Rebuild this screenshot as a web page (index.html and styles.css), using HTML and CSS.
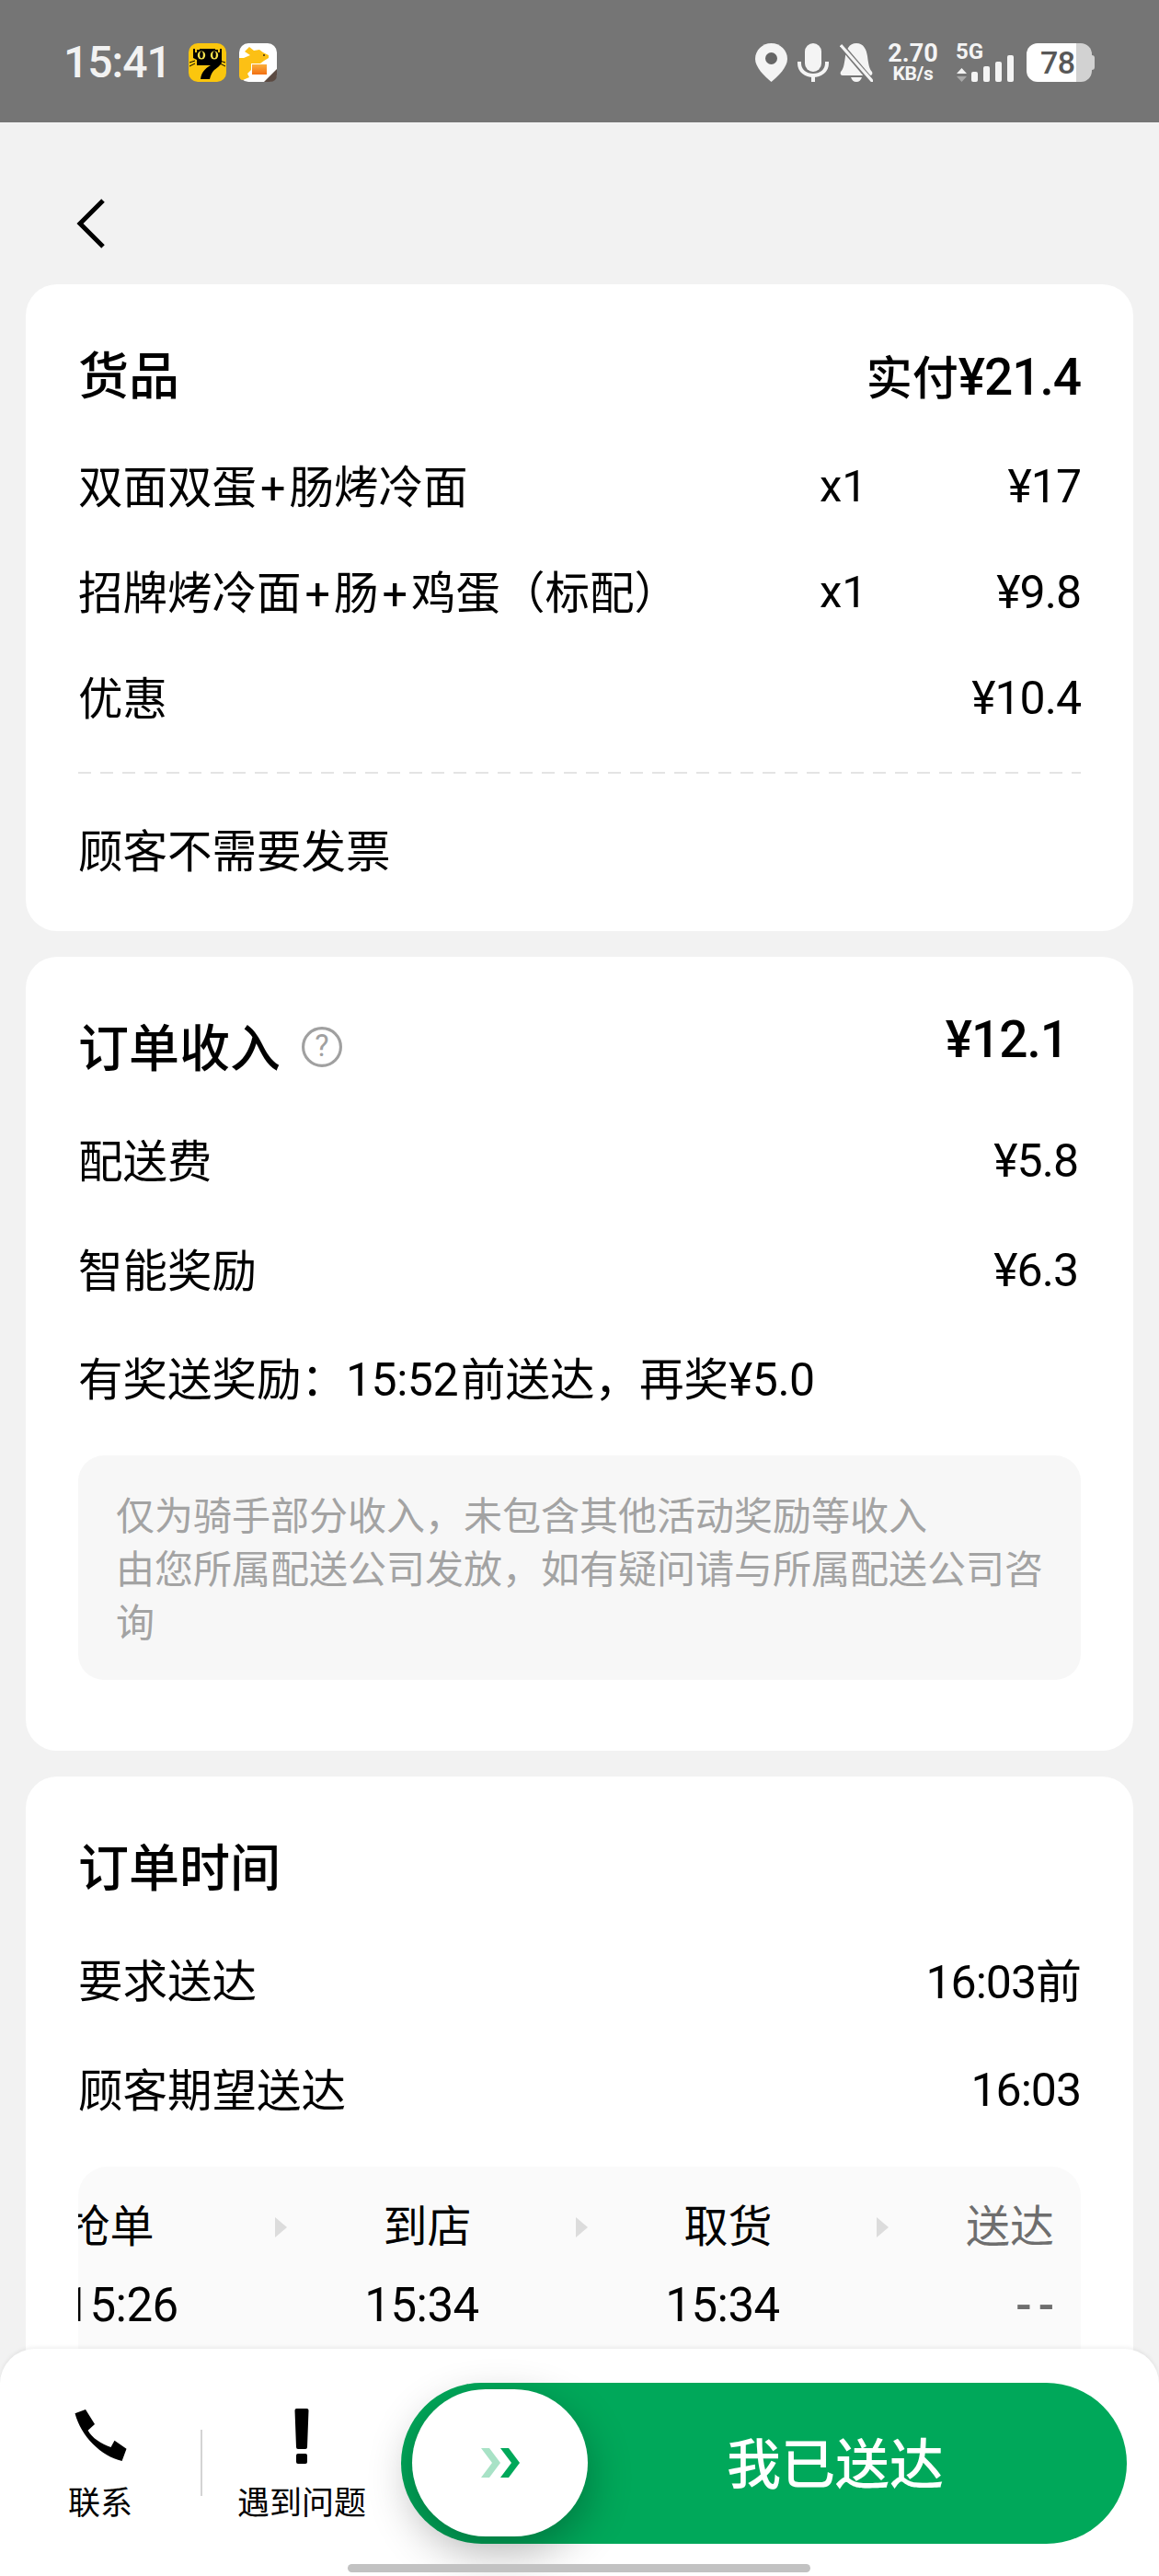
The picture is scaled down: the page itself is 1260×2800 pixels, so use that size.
FILE: index.html
```html
<!DOCTYPE html>
<html lang="zh-CN">
<head>
<meta charset="utf-8">
<title>订单详情</title>
<link rel="stylesheet" href="styles.css">
</head>
<body>
<div class="screen">
  <header class="status">
    <div class="status-left">
      <span class="clock">15:41</span>
      <svg class="app-icon" viewBox="0 0 41 42">
        <rect width="41" height="42" rx="10" fill="#fbc60d"/>
        <path d="M5 6H36V20C36 23 32 26 28 29C25 32 24 35 23 39H13C14 32 17 28 24 24H9V18L5 16Z" fill="#000"/>
        <path d="M7 5H12V7H9V10H7ZM34 5H29V7H32V10H34Z" fill="#fbc60d"/>
        <ellipse cx="14" cy="13" rx="4.2" ry="4.6" fill="#f6e34e"/>
        <ellipse cx="28" cy="13" rx="4.2" ry="4.6" fill="#f6e34e"/>
        <ellipse cx="14" cy="12.5" rx="1.8" ry="3.8" fill="#000"/>
        <ellipse cx="28" cy="12.5" rx="1.8" ry="3.8" fill="#000"/>
        <path d="M1 21L7 19M1 25L7 22M40 21L34 19M40 25L34 22" stroke="#000" stroke-width="1"/>
      </svg>
      <svg class="app-icon" viewBox="0 0 41 42">
        <defs>
          <linearGradient id="box" x1="0" y1="0" x2="0" y2="1">
            <stop offset="0" stop-color="#fbb03b"/>
            <stop offset="1" stop-color="#f26f13"/>
          </linearGradient>
        </defs>
        <rect width="41" height="42" rx="10" fill="#fff"/>
        <path d="M6 9L11 4L16 8L22 7L26 10L32 13L32 16L27 19L23 22H13V29L9 33L11 37L4 40Q0 40 0 34V16L5 16L12 13Z" fill="#fcc015"/>
        <rect x="14" y="23" width="16" height="11" fill="url(#box)"/>
        <path d="M41 28V34Q41 42 33 42H27Z" fill="#5b4a42"/>
        <circle cx="27" cy="13" r="1" fill="#3a2a10"/>
      </svg>
    </div>
    <div class="status-right">
      <svg class="si-pin" viewBox="0 0 35 42">
        <path d="M17.5 0C7.8 0 0 7.6 0 17C0 26 10 36 17.5 42C25 36 35 26 35 17C35 7.6 27.2 0 17.5 0Z" fill="#f4f4f4"/>
        <circle cx="17.5" cy="16.5" r="6.5" fill="#666"/>
      </svg>
      <svg class="si-mic" viewBox="0 0 34 42">
        <rect x="8" y="0" width="18" height="31" rx="9" fill="#f4f4f4"/>
        <path d="M2 20V22C2 30 9 35 17 35C25 35 32 30 32 22V20" fill="none" stroke="#f4f4f4" stroke-width="4"/>
        <rect x="15" y="35" width="4" height="7" fill="#f4f4f4"/>
      </svg>
      <svg class="si-bell" viewBox="0 0 36 42">
        <path d="M18 0C26 0 29 7 30 14C31 22 32 28 35 31C36 33 35 35 33 35H3C1 35 0 33 1 31C4 28 5 22 6 14C7 7 10 0 18 0Z" fill="#f4f4f4"/>
        <path d="M12 37H24C23 40 21 42 18 42C15 42 13 40 12 37Z" fill="#f4f4f4"/>
        <path d="M2 3L36 43" stroke="#757575" stroke-width="6"/>
        <path d="M1 2L36 42" stroke="#f4f4f4" stroke-width="3.2"/>
      </svg>
      <div class="speed">
        <span class="speed-num">2.70</span>
        <span class="speed-unit">KB/s</span>
      </div>
      <svg class="si-net" viewBox="0 0 64 42">
        <text class="si-5g" x="0" y="17">5G</text>
        <path d="M1 33L6.5 27L12 33Z" fill="#f4f4f4"/>
        <path d="M1 36L6.5 42L12 36Z" fill="#a8a8a8"/>
        <rect x="17" y="31" width="7" height="11" rx="2" fill="#f4f4f4"/>
        <rect x="30" y="25" width="7" height="17" rx="2" fill="#f4f4f4"/>
        <rect x="43" y="20" width="7" height="22" rx="2" fill="#f4f4f4"/>
        <rect x="56" y="13" width="7" height="29" rx="2" fill="#f4f4f4"/>
      </svg>
      <div class="battery">
        <div class="battery-body"><span class="battery-num">78</span></div>
        <div class="battery-nub"></div>
      </div>
    </div>
  </header>

  <nav class="appbar">
    <svg class="back" viewBox="0 0 34 56">
      <path d="M30 3L5 28L30 53" fill="none" stroke="#000" stroke-width="5"/>
    </svg>
  </nav>

  <main class="cards">
    <section class="card card-goods">
      <div class="title-row">
        <h2 class="title">货品</h2>
        <div class="paid"><span class="paid-label">实付</span><span class="paid-amount">¥21.4</span></div>
      </div>
      <div class="item"><span class="label">双面双蛋<span class="plus">+</span>肠烤冷面</span><span class="qty">x1</span><span class="amount">¥17</span></div>
      <div class="item"><span class="label">招牌烤冷面<span class="plus">+</span>肠<span class="plus">+</span>鸡蛋（标配）</span><span class="qty">x1</span><span class="amount">¥9.8</span></div>
      <div class="item"><span class="label">优惠</span><span></span><span class="amount">¥10.4</span></div>
      <div class="dash"></div>
      <div class="invoice">顾客不需要发票</div>
    </section>

    <section class="card card-income">
      <div class="title-row">
        <div class="title-with-help">
          <h2 class="title">订单收入</h2>
          <svg class="help" viewBox="0 0 42 42">
            <circle cx="21" cy="21" r="19.5" fill="none" stroke="#a0a0a0" stroke-width="3"/>
            <text class="help-mark" x="21" y="31" text-anchor="middle">?</text>
          </svg>
        </div>
        <span class="income-total">¥12.1</span>
      </div>
      <div class="row"><span class="label">配送费</span><span class="amount value-inset">¥5.8</span></div>
      <div class="row"><span class="label">智能奖励</span><span class="amount value-inset">¥6.3</span></div>
      <div class="row"><span class="label label-mixed">有奖送奖励：<span class="inline-num">15:52</span>前送达，再奖<span class="inline-num">¥5.0</span></span></div>
      <div class="note">仅为骑手部分收入，未包含其他活动奖励等收入<br>由您所属配送公司发放，如有疑问请与所属配送公司咨询</div>
    </section>

    <section class="card card-time">
      <div class="title-row"><h2 class="title">订单时间</h2></div>
      <div class="row"><span class="label">要求送达</span><span class="amount amount-mixed">16:03前</span></div>
      <div class="row"><span class="label">顾客期望送达</span><span class="amount">16:03</span></div>
      <div class="timeline">
        <div class="track">
          <div class="stage stage-first"><span class="stage-label">抢单</span><span class="stage-time">15:26</span></div>
          <span class="arrow"></span>
          <div class="stage"><span class="stage-label">到店</span><span class="stage-time">15:34</span></div>
          <span class="arrow"></span>
          <div class="stage"><span class="stage-label">取货</span><span class="stage-time">15:34</span></div>
          <span class="arrow"></span>
          <div class="stage stage-last"><span class="stage-label">送达</span><span class="stage-time">--</span></div>
        </div>
      </div>
    </section>
  </main>

  <footer class="bar">
    <div class="action">
      <svg class="action-icon" viewBox="0 0 58 60">
        <path d="M1.5 5.3L13 1L23 17L15.6 23.7C20 32 30 38 40.5 42L44.5 34.7L57.5 43.7L52.6 57C30 52 8 30 1.5 5.3Z" fill="#000"/>
      </svg>
      <span class="action-label">联系</span>
    </div>
    <div class="divider"></div>
    <div class="action">
      <svg class="action-icon" viewBox="0 0 58 60">
        <path d="M21.5 2Q21.5 0 23.5 0H34.5Q36.5 0 36.5 2L35 42Q35 44 33 44H25Q23 44 23 42Z" fill="#000"/>
        <rect x="23" y="49" width="12" height="11" rx="2" fill="#000"/>
      </svg>
      <span class="action-label">遇到问题</span>
    </div>
    <div class="slider">
      <div class="knob">
        <svg class="chevrons" viewBox="0 0 42 32">
          <path d="M0 0H9L21 16L9 32H0L12 16Z" fill="#a8e2c6"/>
          <path d="M21 0H30L42 16L30 32H21L33 16Z" fill="#00a85a"/>
        </svg>
      </div>
      <span class="slider-text">我已送达</span>
    </div>
    <div class="home-indicator"></div>
  </footer>
</div>
</body>
</html>
```
FILE: styles.css
```css
* { box-sizing: border-box; }
html, body { margin: 0; padding: 0; }
body {
  font-family: Roboto, "Noto Sans CJK SC", sans-serif;
  color: #000;
  background: #f2f2f2;
}
.screen {
  position: relative;
  width: 1260px;
  height: 2800px;
  overflow: hidden;
  background: #f2f2f2;
}

/* status bar */
.status {
  height: 133px;
  background: #757575;
  display: flex;
  justify-content: space-between;
  align-items: flex-start;
  padding: 47px 70px 0 69px;
}
.status-left { display: flex; align-items: center; gap: 14px; height: 42px; }
.clock {
  font-size: 48px;
  font-weight: 500;
  line-height: 42px;
  letter-spacing: -1px;
  color: #f2f2f2;
  margin-right: 5px;
}
.app-icon { width: 41px; height: 42px; display: block; }
.status-right { display: flex; align-items: flex-start; height: 42px; }
.si-pin { width: 35px; height: 42px; display: block; }
.si-mic { width: 34px; height: 42px; display: block; margin-left: 11px; }
.si-bell { width: 36px; height: 42px; display: block; margin-left: 12px; }
.speed {
  display: flex;
  flex-direction: column;
  align-items: center;
  width: 51px;
  margin-left: 18px;
  color: #f4f4f4;
  font-weight: 700;
}
.speed-num { font-size: 27px; line-height: 22px; height: 24px; }
.speed-unit { font-size: 21px; line-height: 18px; letter-spacing: -0.3px; }
.si-net { width: 64px; height: 42px; display: block; margin-left: 21px; overflow: visible; }
.si-5g { font-family: Roboto, sans-serif; font-size: 24px; font-weight: 700; fill: #f4f4f4; }
.battery { display: flex; align-items: center; margin-left: 13px; height: 42px; }
.battery-body {
  width: 71px;
  height: 42px;
  border-radius: 12px;
  background: linear-gradient(90deg, #fff 0, #fff 54px, #d2d2d2 54px);
  display: flex;
  align-items: center;
  padding-left: 15px;
}
.battery-num { font-size: 34px; font-weight: 500; line-height: 42px; color: #585858; letter-spacing: -0.5px; }
.battery-nub { width: 3px; height: 16px; background: #d2d2d2; border-radius: 0 3px 3px 0; }

/* app bar */
.appbar { height: 176px; padding: 82px 0 0 82px; }
.back { width: 34px; height: 56px; display: block; }

/* cards */
.cards { padding: 0 28px; display: flex; flex-direction: column; gap: 28px; }
.card {
  background: #fff;
  border-radius: 34px;
  padding: 40px 57px 0;
}
.card-goods { height: 703px; }
.card-income { height: 863px; }
.card-time { height: 900px; }

.title-row {
  display: flex;
  justify-content: space-between;
  align-items: center;
  height: 116px;
  margin-bottom: 6px;
}
.title { margin: 0; padding-top: 4px; font-size: 55px; font-weight: 500; line-height: 112px; }
.paid { display: flex; align-items: baseline; }
.paid-label { font-size: 50px; font-weight: 500; }
.paid-amount { font-size: 55px; font-weight: 500; letter-spacing: -1px; }

.label { font-size: 48.5px; padding-bottom: 6px; white-space: nowrap; }
.label-mixed { padding-bottom: 10px; }
.plus { padding: 0 4px; }
.inline-num { font-size: 50px; letter-spacing: -0.5px; padding-right: 3px; }
.item {
  display: grid;
  grid-template-columns: 1fr 120px 164px;
  align-items: center;
  height: 115px;
  font-size: 48px;
}
.amount { font-size: 50px; letter-spacing: -1px; }
.amount-mixed { padding-bottom: 5px; }
.item .amount { text-align: right; }
.qty { font-size: 49px; }
.dash {
  margin-top: 23px;
  height: 2px;
  background-image: repeating-linear-gradient(90deg, #e4e4e4 0, #e4e4e4 14px, transparent 14px, transparent 24px);
}
.invoice { font-size: 48.5px; height: 168px; line-height: 172px; }

.title-with-help { display: flex; align-items: center; gap: 23px; }
.help { width: 44px; height: 44px; display: block; }
.help-mark { font-family: Roboto, sans-serif; font-size: 31px; fill: #a0a0a0; }
.income-total {
  font-size: 55px;
  font-weight: 500;
  letter-spacing: -1px;
  margin: 0 14px 16px 0;
}
.row {
  display: flex;
  justify-content: space-between;
  align-items: center;
  height: 119.5px;
  font-size: 48px;
}
.value-inset { margin-right: 3px; }
.note {
  margin-top: 21px;
  height: 244px;
  padding: 38px 41px 0;
  background: #f7f7f7;
  border-radius: 28px;
  color: #a3a3a3;
  font-size: 42px;
  line-height: 58px;
}

/* timeline */
.timeline {
  margin-top: 23px;
  padding: 38px 0 60px;
  background: #fafafa;
  border-radius: 32px;
  overflow: hidden;
}
.track { display: flex; align-items: flex-start; margin-left: -14px; }
.stage {
  flex: none;
  width: 121px;
  display: flex;
  flex-direction: column;
  align-items: center;
}
.stage-label { font-size: 48px; line-height: 56px; white-space: nowrap; margin-left: 12px; }
.stage-time { font-size: 51px; line-height: 60px; margin-top: 27px; letter-spacing: -0.5px; }
.stage-first .stage-label { margin-left: -24px; }
.stage-last { width: 94px; align-items: flex-end; color: #6e6e6e; }
.stage-last .stage-label { margin-left: 0; }
.stage-last .stage-time { font-weight: 500; letter-spacing: 7px; margin-right: -7px; }
.arrow {
  flex: none;
  width: 13px;
  height: 22px;
  margin: 17px 86px 0 107px;
  background: #dcdcdc;
  clip-path: polygon(0 0, 100% 50%, 0 100%);
}

/* bottom bar */
.bar {
  position: absolute;
  left: 0;
  right: 0;
  bottom: 0;
  height: 247px;
  background: #fff;
  border-radius: 38px 38px 0 0;
  box-shadow: 0 -2px 4px rgba(0, 0, 0, 0.06);
  display: flex;
  align-items: flex-start;
  padding-top: 37px;
}
.action {
  flex: none;
  width: 218px;
  display: flex;
  flex-direction: column;
  align-items: center;
  padding-top: 28px;
}
.action + .divider + .action { width: 216px; }
.action-icon { width: 58px; height: 60px; display: block; }
.action-label { font-size: 35px; line-height: 44px; margin-top: 22px; white-space: nowrap; }
.divider { flex: none; width: 2px; height: 72px; margin-top: 51px; background: #d4d4d4; }
.slider {
  position: relative;
  flex: none;
  width: 789px;
  height: 175px;
  border-radius: 88px;
  background: #00a85a;
  display: flex;
  align-items: center;
  justify-content: center;
  padding: 4px 0 0 155px;
}
.knob {
  position: absolute;
  left: 12px;
  top: 7px;
  width: 191px;
  height: 160px;
  border-radius: 80px;
  background: #fff;
  box-shadow: 0 16px 48px rgba(0, 0, 0, 0.3);
  display: flex;
  align-items: center;
  justify-content: center;
}
.chevrons { width: 42px; height: 32px; display: block; }
.slider-text { font-size: 59px; font-weight: 500; color: #fff; line-height: 70px; }
.home-indicator {
  position: absolute;
  left: 378px;
  bottom: 4px;
  width: 503px;
  height: 9px;
  border-radius: 5px;
  background: #c2c2c2;
}
```
